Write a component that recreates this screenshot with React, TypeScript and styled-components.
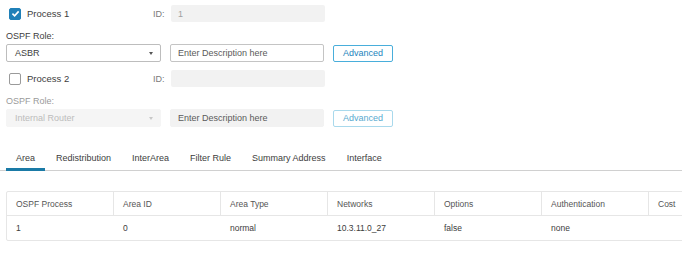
import React from 'react';
import styled, { createGlobalStyle } from 'styled-components';

const GlobalStyle = createGlobalStyle`
  html, body {
    margin: 0;
    padding: 0;
    background: #ffffff;
    font-family: "Liberation Sans", Arial, sans-serif;
    color: #3a3a3a;
    overflow: hidden;
  }
`;

const Page = styled.div`
  width: 682px;
  height: 255px;
  overflow: hidden;
  padding-top: 5px;
  box-sizing: border-box;
`;

const Form = styled.div`
  padding-left: 6px;
  display: flex;
  flex-direction: column;
`;

const ProcessRow = styled.div<{ $spaced?: boolean }>`
  display: flex;
  align-items: center;
  height: 17px;
  margin-top: ${p => (p.$spaced ? '8px' : '0')};
`;

const CheckWrap = styled.label`
  display: flex;
  align-items: center;
  gap: 6px;
  width: 147px;
  padding-left: 3px;
  box-sizing: border-box;
  font-size: 9.5px;
  color: #3d3d3d;
`;

const Box = styled.span<{ $checked?: boolean }>`
  width: 12px;
  height: 12px;
  box-sizing: border-box;
  border-radius: 2px;
  display: flex;
  align-items: center;
  justify-content: center;
  background: ${p => (p.$checked ? '#1f80b8' : '#ffffff')};
  border: 1px solid ${p => (p.$checked ? '#1f80b8' : '#9a9a9a')};
`;

const IdLabel = styled.span`
  font-size: 9px;
  color: #7a7a7a;
  width: 18px;
`;

const IdInput = styled.div`
  width: 154px;
  height: 17px;
  background: #f2f2f2;
  border-radius: 2px;
  font-size: 9px;
  color: #a0a0a0;
  display: flex;
  align-items: center;
  padding-left: 7px;
  box-sizing: border-box;
`;

const RoleLabel = styled.div<{ $disabled?: boolean }>`
  font-size: 9px;
  color: ${p => (p.$disabled ? '#9a9a9a' : '#3d3d3d')};
  margin-top: 9px;
  height: 11px;
  line-height: 11px;
`;

const ControlRow = styled.div`
  display: flex;
  gap: 9px;
  margin-top: 2px;
  align-items: center;
`;

const Select = styled.div<{ $disabled?: boolean }>`
  width: 155px;
  height: 18px;
  box-sizing: border-box;
  border-radius: 2px;
  border: 1px solid ${p => (p.$disabled ? '#f5f5f5' : '#bdbdbd')};
  background: ${p => (p.$disabled ? '#f5f5f5' : '#ffffff')};
  color: ${p => (p.$disabled ? '#bcbcbc' : '#3d3d3d')};
  font-size: 9px;
  display: flex;
  align-items: center;
  justify-content: space-between;
  padding: 0 7px 0 8px;
`;

const Arrow = styled.span<{ $disabled?: boolean }>`
  width: 0;
  height: 0;
  border-left: 2.5px solid transparent;
  border-right: 2.5px solid transparent;
  border-top: 3px solid ${p => (p.$disabled ? '#c8c8c8' : '#555555')};
`;

const TextInput = styled.div<{ $disabled?: boolean }>`
  width: 154px;
  height: 18px;
  box-sizing: border-box;
  border-radius: 2px;
  border: 1px solid ${p => (p.$disabled ? '#f2f2f2' : '#c4c4c4')};
  background: ${p => (p.$disabled ? '#f2f2f2' : '#ffffff')};
  color: #5a5a5a;
  font-size: 9px;
  display: flex;
  align-items: center;
  padding-left: 7px;
`;

const AdvancedButton = styled.button<{ $muted?: boolean }>`
  width: 60px;
  height: 17px;
  box-sizing: border-box;
  border-radius: 2px;
  border: 1px solid ${p => (p.$muted ? '#a9d9ec' : '#49aedb')};
  background: #ffffff;
  color: ${p => (p.$muted ? '#58a9cf' : '#1d84bd')};
  font-family: "Liberation Sans", Arial, sans-serif;
  font-size: 9px;
  padding: 0;
`;

const TabBar = styled.div`
  display: flex;
  gap: 1px;
  margin-top: 21px;
  padding-left: 6px;
  border-bottom: 1px solid #d0d0d0;
  height: 22px;
`;

const Tab = styled.div<{ $active?: boolean }>`
  padding: 0 10px;
  font-size: 9px;
  color: #3d3d3d;
  display: flex;
  align-items: center;
  margin-bottom: -1px;
  border-bottom: 3px solid ${p => (p.$active ? '#1a7aa6' : 'transparent')};
`;

const TableWrap = styled.div`
  margin: 20px 0 0 6px;
`;

const Table = styled.table`
  border-collapse: separate;
  border-spacing: 0;
  border: 1px solid #e6e6e6;
  border-radius: 2px;
  width: 749px;
  table-layout: fixed;
  font-size: 8.5px;
`;

const TH = styled.th`
  text-align: left;
  font-weight: normal;
  color: #555555;
  height: 24px;
  padding: 0 0 0 9px;
  border-bottom: 1px solid #e6e6e6;
  border-right: 1px solid #e6e6e6;
  width: 107px;
  box-sizing: border-box;
  &:last-child { border-right: none; }
`;

const TD = styled.td`
  height: 24px;
  padding: 0 0 0 9px;
  color: #3d3d3d;
`;

const Check = () => (
  <svg width="9" height="9" viewBox="0 0 10 10">
    <path d="M1.6 5.2 L4 7.5 L8.5 2.6" fill="none" stroke="#fff" strokeWidth="1.8" />
  </svg>
);

const columns = ['OSPF Process', 'Area ID', 'Area Type', 'Networks', 'Options', 'Authentication', 'Cost'];
const rows = [['1', '0', 'normal', '10.3.11.0_27', 'false', 'none', '']];
const tabs = ['Area', 'Redistribution', 'InterArea', 'Filter Rule', 'Summary Address', 'Interface'];

export default function App() {
  return (
    <Page>
      <GlobalStyle />
      <Form>
        <ProcessRow>
          <CheckWrap>
            <Box $checked><Check /></Box>
            Process 1
          </CheckWrap>
          <IdLabel>ID:</IdLabel>
          <IdInput>1</IdInput>
        </ProcessRow>
        <RoleLabel>OSPF Role:</RoleLabel>
        <ControlRow>
          <Select>
            ASBR
            <Arrow />
          </Select>
          <TextInput>Enter Description here</TextInput>
          <AdvancedButton>Advanced</AdvancedButton>
        </ControlRow>

        <ProcessRow $spaced>
          <CheckWrap>
            <Box />
            Process 2
          </CheckWrap>
          <IdLabel>ID:</IdLabel>
          <IdInput />
        </ProcessRow>
        <RoleLabel $disabled>OSPF Role:</RoleLabel>
        <ControlRow>
          <Select $disabled>
            Internal Router
            <Arrow $disabled />
          </Select>
          <TextInput $disabled>Enter Description here</TextInput>
          <AdvancedButton $muted>Advanced</AdvancedButton>
        </ControlRow>
      </Form>

      <TabBar>
        {tabs.map((t, i) => (
          <Tab key={t} $active={i === 0}>{t}</Tab>
        ))}
      </TabBar>

      <TableWrap>
        <Table>
          <thead>
            <tr>
              {columns.map(c => <TH key={c}>{c}</TH>)}
            </tr>
          </thead>
          <tbody>
            {rows.map((r, i) => (
              <tr key={i}>
                {r.map((v, j) => <TD key={j}>{v}</TD>)}
              </tr>
            ))}
          </tbody>
        </Table>
      </TableWrap>
    </Page>
  );
}
